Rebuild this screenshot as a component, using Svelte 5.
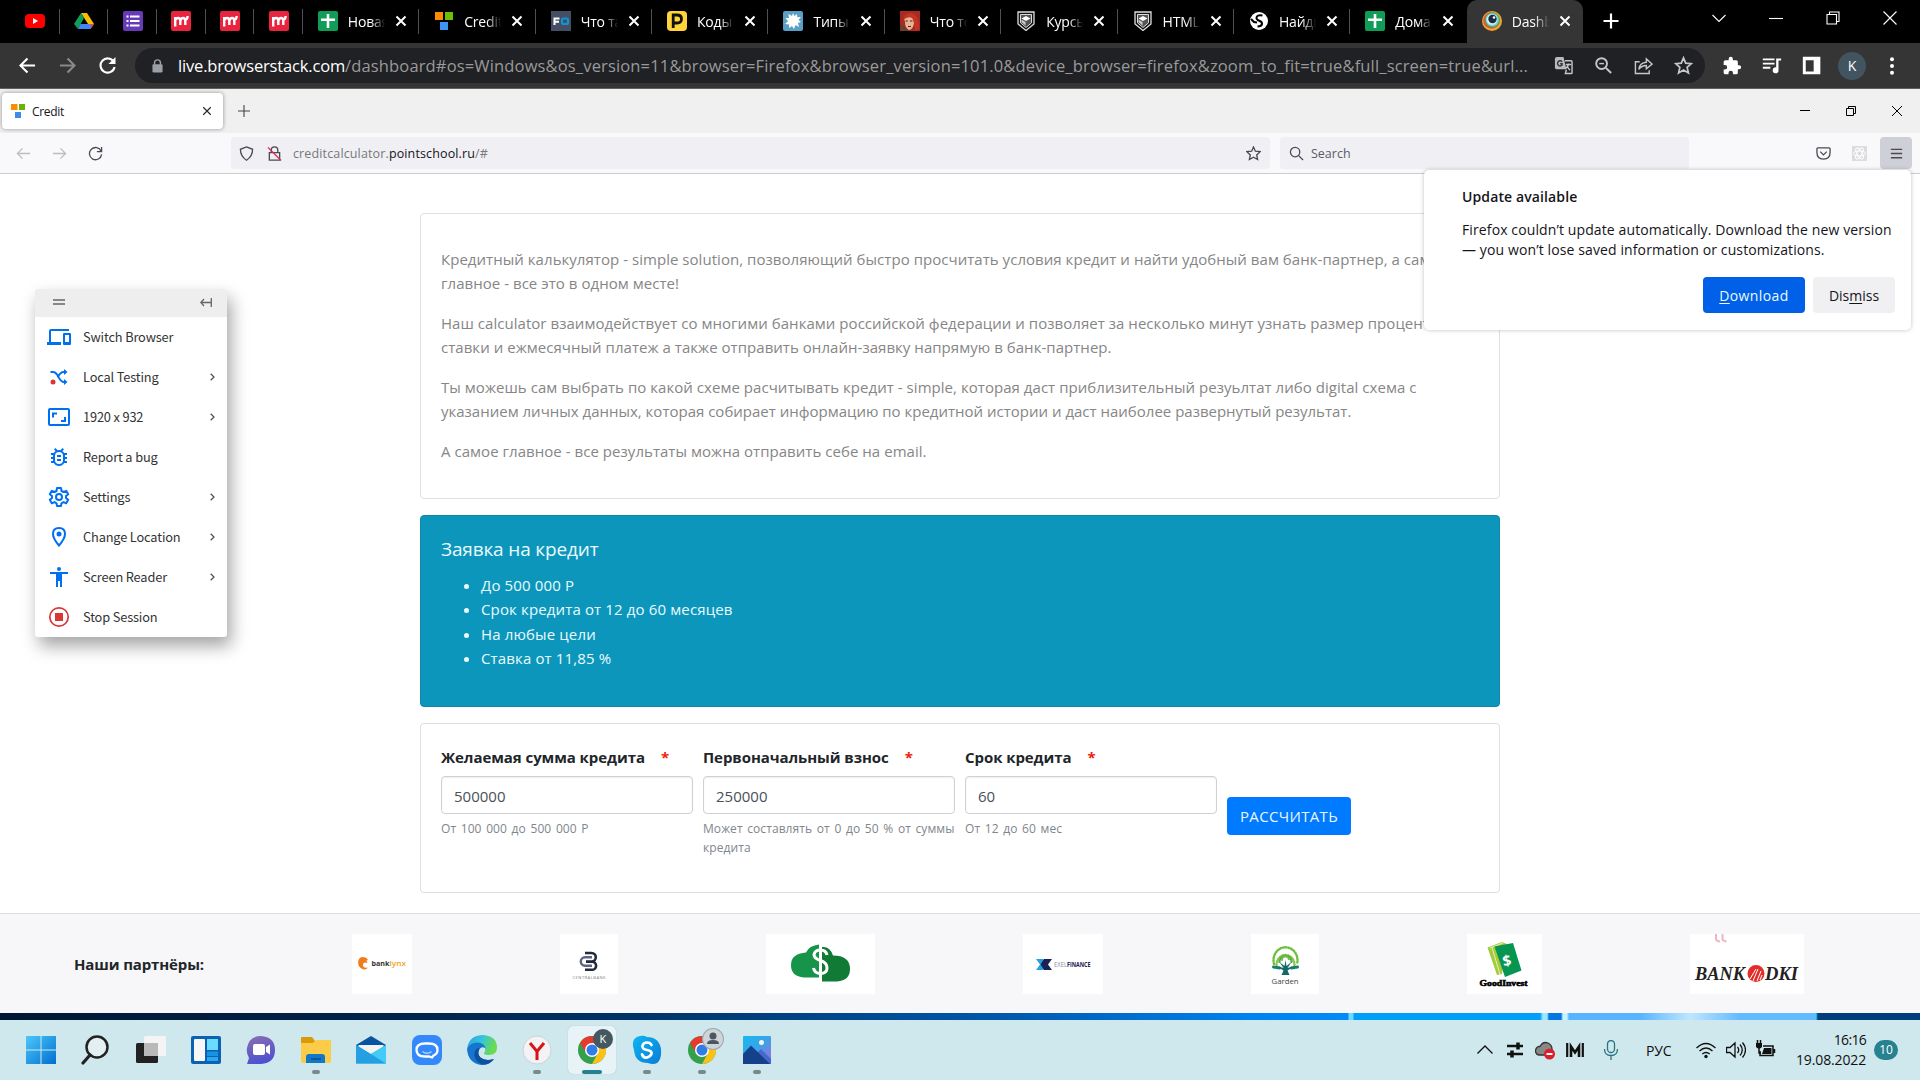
<script>
  const pinned = ['youtube', 'drive', 'forms', 'miro', 'miro', 'miro'];
  const tabs = [
    { icon: 'sheets', title: 'Новая' },
    { icon: 'blocks', title: 'Credit' },
    { icon: 'fo', title: 'Что та' },
    { icon: 'p', title: 'Коды' },
    { icon: 'splat', title: 'Типы' },
    { icon: 'portrait', title: 'Что то' },
    { icon: 'shield', title: 'Курсы' },
    { icon: 'shield', title: 'HTML' },
    { icon: 'globe', title: 'Найди' },
    { icon: 'sheets', title: 'Дома' },
    { icon: 'bs', title: 'Dashb', active: true }
  ];
  const tools = [
    { icon: 'switch', label: 'Switch Browser' },
    { icon: 'local', label: 'Local Testing', more: true },
    { icon: 'resolution', label: '1920 x 932', more: true },
    { icon: 'bug', label: 'Report a bug' },
    { icon: 'gear', label: 'Settings', more: true },
    { icon: 'pin', label: 'Change Location', more: true },
    { icon: 'person', label: 'Screen Reader', more: true },
    { icon: 'stop', label: 'Stop Session' }
  ];
  const fields = [
    { label: 'Желаемая сумма кредита', value: '500000', hint: ['От 100 000 до 500 000 Р'] },
    { label: 'Первоначальный взнос', value: '250000', hint: ['Может составлять от 0 до 50 % от суммы', 'кредита'] },
    { label: 'Срок кредита', value: '60', hint: ['От 12 до 60 мес'] }
  ];
  const apps = [
    { icon: 'start' }, { icon: 'search' }, { icon: 'taskview' }, { icon: 'widgets' }, { icon: 'chat' },
    { icon: 'explorer', open: true }, { icon: 'mail' }, { icon: 'maru' }, { icon: 'edge' },
    { icon: 'yandex', open: true }, { icon: 'chromeK', open: true, active: true },
    { icon: 'skype', open: true }, { icon: 'chromeU', open: true }, { icon: 'photos', open: true }
  ];
</script>

{#snippet favicon(name)}
  <svg class="fav" viewBox="0 0 20 20">
    {#if name === 'youtube'}
      <rect y="3" width="20" height="14" rx="4" fill="#f00" /><path d="M8 7l5 3-5 3z" fill="#fff" />
    {:else if name === 'drive'}
      <path d="M7 2h6l7 11h-6z" fill="#fbbc04" /><path d="M7 2l3 5L4 18 0 13z" fill="#0f9d58" /><path d="M6.500 13H20l-3.500 5H4z" fill="#4285f4" /><path d="M17 13h3l-3.500 5z" fill="#ea4335" />
    {:else if name === 'forms'}
      <rect width="20" height="20" rx="2" fill="#673ab7" /><path d="M3.500 4.500h2v2h-2zM7 4.500h9.500v2H7zM3.500 9h2v2h-2zM7 9h9.500v2H7zM3.500 13.500h2v2h-2zM7 13.500h9.500v2H7z" fill="#fff" />
    {:else if name === 'miro'}
      <rect width="20" height="20" rx="2" fill="#e8243f" /><path d="M4.200 15.500V6M4.200 9.500Q5 7 7 7q2.300 0 2.300 3v4M9.300 10q.6-3 2.800-3t2.200 3v4M14 8.500q2.600.300 2.600-3.500" fill="none" stroke="#fff" stroke-width="2.400" />
    {:else if name === 'sheets'}
      <rect width="20" height="20" rx="2" fill="#0f9d58" /><path d="M8.700 3h2.600v4.500H17v2.600h-5.700V17H8.700v-6.900H3V7.500h5.700z" fill="#fff" />
    {:else if name === 'blocks'}
      <path d="M1 1h8v8H1z" fill="#ff8c00" /><path d="M11 1h8v8h-8z" fill="#6cc000" /><path d="M6 11h8v8H6z" fill="#3c96f0" />
    {:else if name === 'fo'}
      <rect width="20" height="20" fill="#454f63" /><path d="M3.500 14V7.500h5M3.500 10.800h4.500" stroke="#fff" stroke-width="2" fill="none" /><rect x="11" y="7.500" width="6" height="5.500" rx="1.500" fill="none" stroke="#1193d8" stroke-width="2.200" />
    {:else if name === 'p'}
      <rect width="20" height="20" rx="4" fill="#ffd43b" /><path d="M6.200 17V4H10q4.500 0 4.500 4t-4.500 4H7" fill="none" stroke="#111" stroke-width="2.800" />
    {:else if name === 'splat'}
      <rect width="20" height="20" rx="2" fill="#5ba0c4" /><path d="M10 2l1.500 3L14 3l.3 3.200L18 6l-2.500 3 2.500 2-3 1 1 4-3.500-2L11 18l-2-3-3 2 .2-3.500L2 13l3-2.700L2.500 7 6 7l-.5-4L9 5z" fill="#fff" />
    {:else if name === 'portrait'}
      <rect width="20" height="20" fill="#a82a20" /><path d="M4 7q3-4 9-1l1 6q-1 7-5 7-4-2-4-8z" fill="#e8b394" /><path d="M3 9Q5 1 11 2q8 1 8 16l-4 2q0-9-3-13-4-2-9 2z" fill="#c23524" /><path d="M0 13l6 4 2 3H0z" fill="#68402f" /><path d="M5.500 10h2.300M10 10h2.500M8 15.500h3" stroke="#4f2025" stroke-width="1.200" />
    {:else if name === 'shield'}
      <path d="M2 1h16v12l-8 6.500L2 13z" fill="#111" stroke="#ddd" stroke-width="1.300" /><path d="M4.500 3.500h11v8.300L10 16.500l-5.500-4.700z" fill="#555" stroke="#ddd" /><path d="M5.500 7.500L10 5l4.500 2.500L10 10z" fill="#fff" /><path d="M5.500 8.800l4 2.300v3.500l-4-3.500z" fill="#ccc" />
    {:else if name === 'globe'}
      <circle cx="10" cy="10" r="9" fill="#fff" /><path d="M13.500 4.500q-6-1-6 2.500c0 3.500 6 2 5.500 6q-.5 2.500-4.500 2.500M2 8l3 3 3 .5" fill="none" stroke="#000" stroke-width="2" />
    {:else if name === 'bs'}
      <circle cx="10" cy="10" r="10" fill="#f0a62d" /><circle cx="9.500" cy="9.500" r="8.300" fill="#e4503f" /><circle cx="10.500" cy="9" r="7.500" fill="#4fae4e" /><circle cx="10.300" cy="8.700" r="6.500" fill="#7fd3ea" /><circle cx="10" cy="8.500" r="5.200" fill="#d9f1f8" /><circle cx="10.500" cy="8" r="4.200" fill="#192c3a" /><circle cx="12" cy="6.500" r="1.300" fill="#fff" />
    {/if}
  </svg>
{/snippet}

{#snippet cross(cls)}
  <svg class={cls} viewBox="0 0 12 12"><path d="M1.500 1.500l9 9M10.500 1.500l-9 9" /></svg>
{/snippet}

{#snippet toolIcon(name)}
  <svg class="tool-icon" class:red={name === 'stop'} viewBox="0 0 24 24">
    {#if name === 'switch'}
      <path d="M4 6h18V4H4q-2 0-2 2v11H0v3h14v-3H4zM23 8h-6q-1 0-1 1v10q0 1 1 1h6q1 0 1-1V9q0-1-1-1zm-1 9h-4v-7h4z" />
    {:else if name === 'local'}
      <path d="M3.500 7H6q3 0 5.500 5t5.500 5h2M10.500 12.500q3-5.500 6-5.500H19" fill="none" stroke="#0070f0" stroke-width="1.800" /><path d="M17 4l3.500 3L17 10zM17 14l3.500 3-3.500 3z" /><circle cx="6" cy="17" r="2.500" fill="#d93636" />
    {:else if name === 'resolution'}
      <rect x="2" y="4" width="20" height="16" rx="1" fill="none" stroke="#0070f0" stroke-width="2" /><path d="M5 7.500h5v2H7v3H5zM19 17h-5v-2h3v-3h2z" />
    {:else if name === 'bug'}
      <path d="M20 8h-2.800a6 6 0 0 0-1.800-2L17 4.400 15.600 3l-2.200 2.200a6 6 0 0 0-2.800 0L8.400 3 7 4.400 8.600 6a6 6 0 0 0-1.800 2H4v2h2.100L6 11v1H4v2h2v1l.1 1H4v2h2.800a6 6 0 0 0 10.400 0H20v-2h-2.100l.1-1v-1h2v-2h-2v-1l-.1-1H20zm-4 7a4 4 0 0 1-8 0v-4a4 4 0 0 1 8 0zm-6-1h4v2h-4zm0-4h4v2h-4z" />
    {:else if name === 'gear'}
      <path d="M10 3h4l.5 3 2 1 2.700-1.200 2 3.400L19 11v2l2.200 1.800-2 3.400-2.700-1.100-2 1.200L14 21h-4l-.5-2.700-2-1.200-2.700 1.100-2-3.400L5 13v-2L2.800 9.200l2-3.400L7.500 7l2-1z" fill="none" stroke="#0070f0" stroke-width="2" stroke-linejoin="round" /><circle cx="12" cy="12" r="3" fill="none" stroke="#0070f0" stroke-width="2" />
    {:else if name === 'pin'}
      <path d="M12 3q-6 0-6 6 0 4.500 6 11.500Q18 13.500 18 9q0-6-6-6z" fill="none" stroke="#0070f0" stroke-width="2" /><circle cx="12" cy="9" r="2.500" />
    {:else if name === 'person'}
      <circle cx="12" cy="4" r="2" /><path d="M21 9h-6v13h-2v-6h-2v6H9V9H3V7h18z" />
    {:else}
      <circle cx="12" cy="12" r="9.200" fill="none" stroke="#d93636" stroke-width="1.700" /><path d="M8 8h8v8H8z" />
    {/if}
  </svg>
{/snippet}

{#snippet chrome()}
  <circle cx="15" cy="15" r="14" fill="#34a04c" />
  <path d="M3 8a14 14 0 0 1 24.300 0L15 9z" fill="#e33b2e" /><path d="M3 8l6 10 6-10z" fill="#e33b2e" />
  <path d="M15 8h12.200A14 14 0 0 1 15 29l6-11z" fill="#fbc116" />
  <circle cx="15" cy="15" r="7" fill="#fff" /><circle cx="15" cy="15" r="5.500" fill="#2f7de9" />
{/snippet}

{#snippet appIcon(name)}
  <svg class="app-icon" viewBox="0 0 30 30">
    {#if name === 'start'}
      <defs><linearGradient id="win" x2="1" y2="1" gradientUnits="objectBoundingBox"><stop stop-color="#4cc8fa" /><stop offset="1" stop-color="#006fd0" /></linearGradient></defs>
      <path d="M0 1h14.500v13.500H0zM15.500 1H30v13.500H15.500zM0 15.500h14.500V29H0zM15.500 15.500H30V29H15.500z" fill="url(#win)" />
    {:else if name === 'search'}
      <circle cx="16" cy="12" r="10.500" fill="#e4eff2" stroke="#222" stroke-width="2.500" /><path d="M9 20l-7 8" stroke="#222" stroke-width="3.200" stroke-linecap="round" />
    {:else if name === 'taskview'}
      <rect x="0" y="8" width="22" height="20" rx="1.500" fill="#222" /><rect x="8" y="1" width="22" height="20" rx="1.500" fill="#f4f4f4" /><path d="M8 8h14v13H9q-1 0-1-1z" fill="#b9b9b9" />
    {:else if name === 'widgets'}
      <rect y="1" width="30" height="28" rx="2" fill="#0c62b0" /><rect x="3" y="4" width="11" height="22" rx="1" fill="#f7f7f7" /><path d="M16 4h11v11H16z" fill="#6bdcff" /><path d="M16 16.500h11V21H16z" fill="#1494e6" /><path d="M16 22h11v4H16z" fill="#28a9f0" />
    {:else if name === 'chat'}
      <defs><linearGradient id="cht" y2="1" x2=".3"><stop stop-color="#8a6faf" /><stop offset="1" stop-color="#4f52cf" /></linearGradient></defs>
      <path d="M1 29l2-6Q0 18 1 13 3 1 15 1q14 1 14 14T15 29z" fill="url(#cht)" /><rect x="7" y="9" width="12" height="11" rx="2" fill="#fff" /><path d="M20 12l4-2.500v10L20 17z" fill="#fff" />
    {:else if name === 'explorer'}
      <path d="M0 3q0-1 1-1h10l3 4v4H0z" fill="#dc9a09" /><path d="M0 8h12l3-3h14q1 0 1 1v20q0 2-2 2H2q-2 0-2-2z" fill="#fccb48" /><path d="M5 28v-6q0-3 3-3h13q3 0 3 3v6z" fill="#1277c9" /><path d="M10 24h10" stroke="#064d88" stroke-width="1.500" />
    {:else if name === 'mail'}
      <path d="M0 10L15 1l15 9v6H0z" fill="#0a53a0" /><path d="M2.500 10h25v2L15 20 2.500 12z" fill="#f3f3f3" /><path d="M0 10l15 9 15-9v18.500H0z" fill="#30b4ee" /><path d="M0 10l30 18.500H0z" fill="#239fe2" /><path d="M15 19l15-9v18.500z" fill="#43caf6" />
    {:else if name === 'maru'}
      <rect width="30" height="30" rx="8" fill="#3389fb" /><path d="M17 21.500H13q-8.500 0-8.500-6.500T13 8.500h4q8.500 0 8.500 6.500 0 4-4 5.500l-1.500 2z" fill="none" stroke="#fff" stroke-width="2.300" /><path d="M10.500 16.500q4.500 3.500 9 0" fill="none" stroke="#a9d2ff" stroke-width="1.500" />
    {:else if name === 'edge'}
      <defs><linearGradient id="ed" x2="1" y2=".3"><stop stop-color="#2a9fe4" /><stop offset=".5" stop-color="#33c4dc" /><stop offset="1" stop-color="#6bdc4e" /></linearGradient></defs>
      <path d="M0 14Q2 0 16 0q14 1 14 12.500 0 7.500-8 7.500-5 0-5-2 2-2 1-5Q12 5 0 14z" fill="url(#ed)" /><path d="M0 14q3-6.500 10-6.500 8 .5 8.500 6-3-2.500-6 .5-3 4 1 8.500 5 4 13.500 1.500-5 6.500-13 6Q1 28 0 14z" fill="#1875cf" /><path d="M11.500 12.500q-5 3-4 9 2.500 7 9 8Q23 29.500 27 24q-8 2.500-13-1-4.500-4-1.500-9z" fill="#0c509e" />
    {:else if name === 'yandex'}
      <circle cx="15" cy="15" r="14" fill="#f3f3f3" stroke="#c9d3d6" /><path d="M8 8l7 8.500L22 8M15 16v9" stroke="#d8131a" stroke-width="3" fill="none" />
    {:else if name === 'skype'}
      <defs><linearGradient id="sky" y2="1"><stop stop-color="#0db6f2" /><stop offset="1" stop-color="#0b7cd5" /></linearGradient></defs>
      <path d="M8 1q4-1 7 1 12 0 14 12 1 15-8 15-3 0-5-1Q3 28 2 15-2 3 8 1z" fill="url(#sky)" /><path d="M19.500 10q-1-2.500-4.500-2.500t-4.500 3.200 4.500 4.300 4.500 3.800-4.500 3.700-5-3.200" fill="none" stroke="#fff" stroke-width="2.700" stroke-linecap="round" />
    {:else if name === 'photos'}
      <defs><linearGradient id="ph" x2="1" y2="1"><stop stop-color="#18b9ee" /><stop offset=".45" stop-color="#36a5ea" /><stop offset="1" stop-color="#a46ad8" /></linearGradient></defs>
      <rect x="1" y="1" width="28" height="28" rx="1" fill="url(#ph)" /><path d="M13 20l6-6 10 10v5H10z" fill="#4468cc" /><path d="M1 19l8-8.500L28 29H1z" fill="#14418a" /><circle cx="19.500" cy="7.500" r="2.500" fill="#f3f5e7" />
    {:else}
      {@render chrome()}
    {/if}
  </svg>
{/snippet}

<div class="screen">
  <header class="tabstrip">
    {#each pinned as name}
      <div class="pinned">{@render favicon(name)}</div>
    {/each}
    {#each tabs as tab, i}
      <div class="tab" class:active={tab.active} class:last={i === tabs.length - 2}>
        {@render favicon(tab.icon)}
        <span class="tab-title">{tab.title}</span>
        {@render cross('tab-close')}
      </div>
    {/each}
    <svg class="newtab" viewBox="0 0 16 16"><path d="M8 .5v15M.5 8h15" /></svg>
    <div class="winbtns">
      <svg viewBox="0 0 14 14"><path d="M.5 4l6.500 6.500L13.500 4" /></svg>
      <svg viewBox="0 0 14 14"><path d="M0 7.500h14" /></svg>
      <svg viewBox="0 0 14 14"><path d="M1 3.500h9.500V13H1zM3.500 3.500V1H13v9.500h-2.500" /></svg>
      <svg viewBox="0 0 14 14"><path d="M.5.500l13 13M13.500.500l-13 13" /></svg>
    </div>
  </header>

  <div class="toolbar">
    <div class="cell"><svg viewBox="0 0 18 18" class="nav"><path d="M17 9H2M9 1.500L1.500 9 9 16.500" /></svg></div>
    <div class="cell"><svg viewBox="0 0 18 18" class="nav dim"><path d="M1 9h15M9 1.500L16.500 9 9 16.500" /></svg></div>
    <div class="cell"><svg viewBox="0 0 18 18" class="nav"><path d="M15.500 5A7.500 7.500 0 1 0 16.500 10.500" /><path d="M17.500 0v7.500H10z" class="solid" /></svg></div>
    <div class="omnibox">
      <svg class="lock" viewBox="0 0 12 15"><path d="M2.800 6V4a3.200 3.200 0 0 1 6.400 0v2" fill="none" stroke="#9aa0a6" stroke-width="1.600" /><rect x=".5" y="5.500" width="11" height="9" rx="1.300" fill="#9aa0a6" /></svg>
      <span class="address"><b>live.browserstack.com</b>/dashboard#os=Windows&amp;os_version=11&amp;browser=Firefox&amp;browser_version=101.0&amp;device_browser=firefox&amp;zoom_to_fit=true&amp;full_screen=true&amp;url...</span>
      <div class="cell"><svg viewBox="0 0 20 20" class="act"><path d="M3 1h7l3 13H3q-2 0-2-2V3q0-2 2-2z" fill="#b8babd" stroke="none" /><path d="M11.500 5H18q1 0 1 1v11.500q0 1-1 1h-6l1-4M12.500 9H18M15.300 8v1q-1 3-3 4M14 11q1.500 3 3 4" /><path d="M8.500 6a2.700 2.700 0 1 0 0 3.500V8.200H6.500" stroke="#333" /></svg></div>
      <div class="cell"><svg viewBox="0 0 20 20" class="act"><circle cx="8" cy="8" r="5.700" stroke-width="2" /><path d="M12.500 12.500L18 18" stroke-width="2.200" /><path d="M5.500 8h5" /></svg></div>
      <div class="cell"><svg viewBox="0 0 20 20" class="act"><path d="M6 6H1.500v12.500H16V15M5 14q1-7 8-7.500V3l6 5.500L13 13.500V10q-5 0-8 4z" /></svg></div>
      <div class="cell"><svg viewBox="0 0 20 20" class="act"><path d="M10 2l2.300 5.500 6 .5-4.500 4 1.400 5.800L10 14.700l-5.200 3.100L6.200 12 1.700 8l6-.5z" stroke-width="1.800" /></svg></div>
    </div>
    <div class="actions">
      <div class="cell"><svg viewBox="0 0 24 24" class="ext"><path d="M20.500 11H19V7q0-2-2-2h-4V3.500a2.500 2.500 0 0 0-5 0V5H4Q2 5 2 7v3.800h1.500a2.700 2.700 0 0 1 0 5.400H2V20q0 2 2 2h3.800v-1.500a2.700 2.700 0 0 1 5.400 0V22H17q2 0 2-2v-4h1.500a2.500 2.500 0 0 0 0-5z" /></svg></div>
      <div class="cell"><svg viewBox="0 0 24 24" class="ext"><path d="M1 3h14v2.200H1zM1 8h14v2.200H1zM1 13h9v2.200H1zM17 3h6v2.500h-3.200V17a3.500 3.500 0 1 1-2.800-3.300z" /></svg></div>
      <div class="cell"><svg viewBox="0 0 24 24" class="ext"><path d="M1 1h21v21H1zm3.500 4v13.500H14V5z" fill-rule="evenodd" /></svg></div>
      <div class="cell"><span class="avatar">K</span></div>
      <div class="cell"><svg viewBox="0 0 24 24" class="ext"><circle cx="12" cy="4" r="2.400" /><circle cx="12" cy="12" r="2.400" /><circle cx="12" cy="20" r="2.400" /></svg></div>
    </div>
  </div>

  <div class="ff-tabs">
    <div class="ff-tab">
      <svg class="ff-fav" viewBox="0 0 14 14"><path d="M0 0h6.500v6H0z" fill="#ff8c00" /><path d="M8 0h6v6H8z" fill="#6bb300" /><path d="M4 8h6v6H4z" fill="#3c8de8" /></svg>
      <span class="ff-title">Credit</span>
      {@render cross('ff-x')}
    </div>
    <svg class="ff-plus" viewBox="0 0 12 12"><path d="M6 0v12M0 6h12" /></svg>
    <div class="ff-win">
      <svg viewBox="0 0 14 14"><path d="M2 6.500h10" /></svg>
      <svg viewBox="0 0 14 14"><path d="M2.500 4.500h7v7h-7zM4.500 4.500v-2h7v7h-2" /></svg>
      <svg viewBox="0 0 14 14"><path d="M2 2l10 10M12 2L2 12" /></svg>
    </div>
  </div>

  <div class="ff-nav">
    <div class="ff-btns">
      <svg class="off" viewBox="0 0 16 16"><path d="M15 8H1.500M7 2.500L1.500 8 7 13.500" /></svg>
      <svg class="off" viewBox="0 0 16 16"><path d="M1 8h13.500M9 2.500L14.500 8 9 13.500" /></svg>
      <svg viewBox="0 0 16 16"><path d="M14 5.500A6.500 6.500 0 1 0 14.500 9M14.500 1v5h-5" /></svg>
    </div>
    <div class="ff-url">
      <svg viewBox="0 0 16 16"><path d="M8 1l6.500 2.500Q14.500 11 8 15.200 1.500 11 1.500 3.500z" /></svg>
      <svg viewBox="0 0 16 16"><path d="M4.500 7V4.500a3.500 3.500 0 0 1 7 0V7M2.500 7h11v8h-11z" /><path d="M1 1.500l14 14" stroke="#e22850" /></svg>
      <span class="ff-address">creditcalculator.<b>pointschool.ru</b>/#</span>
      <svg class="ff-star" viewBox="0 0 16 16"><path d="M8 1l2 4.500 5 .500-3.600 3.500 1 5L8 12l-4.400 2.500 1-5L1 6l5-.5z" /></svg>
    </div>
    <div class="ff-search">
      <svg viewBox="0 0 16 16"><circle cx="6.500" cy="6.500" r="5" /><path d="M10 10l5 5" /></svg>
      <span>Search</span>
    </div>
    <div class="ff-ext">
      <svg viewBox="0 0 16 16"><path d="M2 2h12q1 0 1 1v4q0 7-7 7T1 7V3q0-1 1-1zM4.500 6L8 9.500 11.500 6" /></svg>
      <svg viewBox="0 0 16 16"><rect width="16" height="16" fill="#dcdcdc" stroke="none" /><g stroke="#fff" stroke-width="1"><ellipse cx="8" cy="8" rx="6.500" ry="2.700" /><ellipse cx="8" cy="8" rx="6.500" ry="2.700" transform="rotate(60 8 8)" /><ellipse cx="8" cy="8" rx="6.500" ry="2.700" transform="rotate(120 8 8)" /></g></svg>
    </div>
    <div class="ff-menu"><svg viewBox="0 0 16 16"><path d="M2 3.500h12M2 8h12M2 12.500h12" /></svg></div>
  </div>

  <main class="page">
    <section class="card intro">
      <p>Кредитный калькулятор - simple solution, позволяющий быстро просчитать условия кредит и найти удобный вам банк-партнер, а самое<br />главное - все это в одном месте!</p>
      <p>Наш calculator взаимодействует со многими банками российской федерации и позволяет за несколько минут узнать размер процентной<br />ставки и ежмесячный платеж а также отправить онлайн-заявку напрямую в банк-партнер.</p>
      <p>Ты можешь сам выбрать по какой схеме расчитывать кредит - simple, которая даст приблизительный резуьлтат либо digital схема с<br /><span class="tight">указанием личных данных, которая собирает информацию по кредитной истории и даст наиболее развернутый результат.</span></p>
      <p>А самое главное - все результаты можна отправить себе на email.</p>
    </section>

    <section class="card offer">
      <h2>Заявка на кредит</h2>
      <ul>
        <li>До 500 000 Р</li>
        <li>Срок кредита от 12 до 60 месяцев</li>
        <li>На любые цели</li>
        <li>Ставка от 11,85 %</li>
      </ul>
    </section>

    <section class="card calc">
      {#each fields as f}
        <div class="field">
          <span class="label">{f.label}<i>*</i></span>
          <div class="input">{f.value}</div>
          <small>{#each f.hint as line}<span>{line}</span>{/each}</small>
        </div>
      {/each}
      <button class="submit">РАССЧИТАТЬ</button>
    </section>
  </main>

  <footer class="partners">
    <strong>Наши партнёры:</strong>
    <div class="logo lynx">
      <svg viewBox="0 0 60 60"><path d="M14.500 24q-6-3-8 2-2 7 5 9.500 3 .500 4.500-2-5 1-5-2.500t4.500-2l-1-2.500 1.500-.500z" fill="#ef7d1c" /><text x="19.500" y="32" font-size="7.500" font-weight="700" textLength="18" lengthAdjust="spacingAndGlyphs" fill="#333">bank</text><text x="37.500" y="32" font-size="7.500" font-weight="600" textLength="16.500" lengthAdjust="spacingAndGlyphs" fill="#efa122">lynx</text></svg>
    </div>
    <div class="logo central">
      <svg viewBox="0 0 58 60"><path d="M25 19h6.500a4.300 4.300 0 0 1 0 8.600H26M32 27.600a4.100 4.100 0 0 1 0 8.200H25" fill="none" stroke="#22293b" stroke-width="2.600" /><path d="M32 23.300h-7a4.200 4.200 0 0 0 0 8.400h7" fill="none" stroke="#5d6380" stroke-width="2.400" /><text x="12.500" y="44.500" font-size="4" textLength="33" lengthAdjust="spacing" fill="#777">CENTRALBANK</text></svg>
    </div>
    <div class="logo cloud">
      <svg viewBox="0 0 109 60"><path d="M53 43.500H38q-13-1-13-12.500t15-12.500q3-7 13-8z" fill="#16944a" /><path d="M56 47.500V13q8-1 11 8.500 17 0 17 13.500 0 11.500-13 12.500z" fill="#117a35" /><path d="M61 21q-1-5-6.500-5T48 20.500q0 4 6.500 6t6.500 7.500q0 5.500-6.500 5.500-6 0-7-5.500M54.500 10v34" stroke="#fff" stroke-width="3" fill="none" /></svg>
    </div>
    <div class="logo exel">
      <svg viewBox="0 0 80 60"><path d="M13 25h7l4 5.500-4 5.500h-7l4-5.500z" fill="#26a3dc" /><path d="M21 25h8l-4 5.500 4 5.500h-8l-3.500-5.500z" fill="#1a2154" /><text x="31" y="33" font-size="6.500" textLength="13" lengthAdjust="spacingAndGlyphs" fill="#858aa0">EXEL</text><text x="44" y="33" font-size="6.500" font-weight="700" textLength="23.500" lengthAdjust="spacingAndGlyphs" fill="#1a2154">FINANCE</text></svg>
    </div>
    <div class="logo garden">
      <svg viewBox="0 0 68 60"><g fill="none" stroke-linecap="round" stroke-dasharray="1.200 1.700"><path d="M23 30a12 13 0 1 1 23 0" stroke="#6cbf3f" stroke-width="2.400" /><path d="M25.500 31a9 10 0 1 1 18 0" stroke="#8cc63f" stroke-width="2.400" /><path d="M28.500 28a6 6 0 1 1 12 0" stroke="#4bab58" stroke-width="2.200" /><path d="M31 26a3.500 3.500 0 0 1 7 0" stroke="#7abf4a" stroke-width="2" /><path d="M22.500 33l6 1M46.500 33l-6 1" stroke="#158074" stroke-width="3" /></g><path d="M30.500 41l2-4.500-8-5 8 2.500-4-6 5 4 1-6 1 6 5-4-4 6 8-2.500-8 5 2 4.500z" fill="#116a67" /><text x="20.500" y="50" font-size="8" textLength="27" lengthAdjust="spacingAndGlyphs" fill="#444">Garden</text></svg>
    </div>
    <div class="logo invest">
      <svg viewBox="0 0 75 60"><path d="M20.500 13.500L35 8l5 2-5 30-5 1z" fill="#a5cb3b" /><path d="M23 14l13-5M25 13.500l8 27" fill="none" stroke="#fff" stroke-width=".7" /><path d="M27.500 12.500L46 9l8.500 27.500L38 43z" fill="#079552" /><text x="35.500" y="32" font-size="15" font-weight="700" fill="#fff" transform="rotate(-12 40 27)">$</text><text x="12.500" y="52" font-size="7.500" font-weight="900" class="serif" textLength="48" lengthAdjust="spacingAndGlyphs" stroke="#000" stroke-width=".5">GoodInvest</text></svg>
    </div>
    <div class="logo dki">
      <svg viewBox="0 0 114 60"><path d="M26 0v5q0 2 4 2.500M32.500 0v5q0 2 4 2.500" stroke="#f0b5c0" stroke-width="2" fill="none" /><g class="serif" font-weight="700" font-style="italic" font-size="19" fill="#222"><text x="5" y="46" textLength="50" lengthAdjust="spacingAndGlyphs">BANK</text><text x="75" y="46" textLength="33" lengthAdjust="spacingAndGlyphs">DKI</text></g><circle cx="66" cy="39.500" r="8.500" fill="#e32d2c" /><path d="M60 45l6-10M63 47l5-12M67 47l4-10M70 46l2-5" stroke="#fff" stroke-width="1" /></svg>
    </div>
  </footer>

  <div class="wallpaper"></div>

  <div class="taskbar">
    <div class="apps">
      {#each apps as app}
        <div class="app" class:current={app.active} class:open={app.open}>
          {@render appIcon(app.icon)}
          {#if app.icon === 'chromeK'}<span class="badge k">K</span>{/if}
          {#if app.icon === 'chromeU'}
            <span class="badge"><svg viewBox="0 0 20 20"><circle cx="10" cy="7" r="3.500" /><path d="M4 15q0-4 6-4t6 4z" /></svg></span>
          {/if}
        </div>
      {/each}
    </div>
    <div class="tray">
      <svg viewBox="0 0 20 20"><path d="M2.500 13.500L10 6l7.500 7.500" /></svg>
      <svg viewBox="0 0 20 20"><path d="M2 6h16M2 14h16" stroke-width="2.300" /><path d="M13 2.500v7M7 10.500v7" stroke-width="3.500" /></svg>
      <svg viewBox="0 0 20 20"><path d="M4 15q-4-1-3.500-5Q2 6 5 6.500 8 1 13 3q4 2 4 6v6z" fill="#888" stroke="#333" /><circle cx="14.500" cy="14" r="5.500" fill="#dc1f2c" stroke="none" /><path d="M11.500 14h6" stroke="#fff" stroke-width="2" /></svg>
      <svg viewBox="0 0 20 20"><path d="M2.200 3v14M17.800 3v14" stroke-width="2.200" /><path d="M6 17V6.500l4 6 4-6V17" stroke-width="2.600" /></svg>
      <svg class="mic" viewBox="0 0 20 20"><rect x="6.500" y=".5" width="7" height="12" rx="3.500" /><path d="M3.500 9q0 6.500 6.500 6.500T16.500 9M10 15.500V20" /></svg>
      <span class="lang">РУС</span>
      <svg viewBox="0 0 20 20"><path d="M.5 8q9.500-9 19 0M3.500 11q6.500-6 13 0M6.300 14q3.700-3 7.400 0" /><circle cx="10" cy="16.500" r="1.700" fill="#111" stroke="none" /></svg>
      <svg viewBox="0 0 20 20"><path d="M.5 7.500h3.500L9 3v14l-5-4.500H.5zM11.500 7q2.500 3 0 6M14 4.500q4.500 5.500 0 11M16.500 2.500q6 7.500 0 15" /></svg>
      <svg viewBox="0 0 20 20"><path d="M7 6h10v9.500H4V11M18.500 9v4" stroke-width="1.500" /><path d="M8 8h7.500v6H6z" fill="#111" stroke="none" /><path d="M0 3h6v4q-3 3-6 0z" fill="#111" stroke="none" /><path d="M1.500 0v3M4.500 0v3M3 7v6h2" stroke-width="1.500" /></svg>
      <div class="clock"><span class="time">16:16</span><span>19.08.2022</span></div>
      <span class="count">10</span>
    </div>
  </div>

  <aside class="widget">
    <div class="widget-head">
      <svg viewBox="0 0 12 6"><path d="M0 1h12M0 5h12" /></svg>
      <svg class="collapse" viewBox="0 0 12 9"><path d="M1 4.500h10M4 1L.8 4.500 4 8M11.300 0v9" /></svg>
    </div>
    {#each tools as t}
      <div class="tool">
        {@render toolIcon(t.icon)}
        <span class="tool-label">{t.label}</span>
        {#if t.more}<svg class="more" viewBox="0 0 5 8"><path d="M.7.700L4 4 .7 7.300" /></svg>{/if}
      </div>
    {/each}
  </aside>

  <div class="popup">
    <h3>Update available</h3>
    <p>Firefox couldn’t update automatically. Download the new version<br />— you won’t lose saved information or customizations.</p>
    <div class="popup-btns">
      <button class="primary"><u>D</u>ownload</button>
      <button>Dis<u>m</u>iss</button>
    </div>
  </div>
</div>

<style>
  :global(body) { margin: 0; background: #fff; }
  .screen {
    position: relative; display: flex; flex-direction: column;
    width: 1920px; height: 1080px; overflow: hidden;
    font-family: 'Open Sans', 'Noto Sans', sans-serif; color: #212529;
  }
  .screen * { box-sizing: border-box; }
  svg { flex: none; display: block; }
  button { font: inherit; border: 0; padding: 0; }
  .serif { font-family: 'Liberation Serif', serif; }

  .tabstrip { display: flex; height: 43px; flex: none; background: #000; padding-left: 11px; }
  .pinned, .tab { display: flex; align-items: center; flex: none; position: relative; padding-bottom: 1px; }
  .pinned { width: 48.650px; justify-content: center; }
  .tab { width: 116.400px; padding-left: 15px; }
  .pinned::after, .tab::after { content: ''; position: absolute; right: 0; top: 9px; width: 1px; height: 25px; background: #505050; }
  .tab.active::after, .tab.last::after { display: none; }
  .tab.active { background: #353535; border-radius: 10px 10px 0 0; }
  .fav { width: 20px; height: 20px; }
  .tab-title {
    width: 38px; margin-left: 10px; overflow: hidden; white-space: nowrap; color: #fff; font-size: 14px; letter-spacing: -.2px;
    mask-image: linear-gradient(90deg, #000 60%, transparent 98%);
  }
  .tab-close { width: 12px; height: 12px; margin-left: 9px; fill: none; stroke: #fff; stroke-width: 2; }
  .newtab { width: 16px; height: 16px; margin: 13px 0 0 20px; stroke: #fff; stroke-width: 2.200; }
  .winbtns { display: flex; margin: 11px 0 0 auto; padding-right: 23px; gap: 43px; }
  .winbtns svg { width: 14px; height: 14px; fill: none; stroke: #fff; stroke-width: 1.100; }

  .toolbar { display: flex; align-items: center; height: 46px; flex: none; background: #353535; border-bottom: 1px solid #606060; padding-left: 7px; }
  .cell { width: 40px; display: flex; justify-content: center; flex: none; }
  .nav { width: 17px; height: 17px; fill: none; stroke: #fff; stroke-width: 2.200; }
  .nav.dim { stroke: #8a8a8a; }
  .solid { fill: #fff; stroke: none; }
  .omnibox { display: flex; align-items: center; width: 1570px; height: 35px; margin-left: 8px; padding: 0 2px 0 17px; border-radius: 18px; background: #202124; }
  .lock { width: 11px; height: 14px; }
  .address { flex: 1; margin-left: 15px; white-space: nowrap; font-size: 16.500px; letter-spacing: .152px; color: #9a9a9a; }
  .address b { font-weight: 400; letter-spacing: -.168px; color: #fff; }
  .act { width: 19px; height: 19px; fill: none; stroke: #c4c6c9; stroke-width: 1.500; }
  .actions { display: flex; align-items: center; margin-left: 7px; }
  .ext { width: 20px; height: 20px; fill: #fff; }
  .avatar { width: 28px; height: 28px; border-radius: 50%; background: #41545f; color: #fff; font-size: 14px; line-height: 28px; text-align: center; }

  .ff-tabs { display: flex; height: 44px; flex: none; background: #f0f0f0; padding-left: 2px; align-items: center; }
  .ff-tab { display: flex; align-items: center; width: 221px; height: 36px; background: #fff; border-radius: 4px; box-shadow: 0 0 4px rgba(0,0,0,.4); padding: 0 11px 0 9px; font-size: 12px; color: #15141a; }
  .ff-title { letter-spacing: -.3px; }
  .ff-fav { width: 14px; height: 14px; margin-right: 7px; }
  .ff-x { width: 10px; height: 10px; margin-left: auto; stroke: #222; stroke-width: 1.300; }
  .ff-plus { width: 12px; height: 12px; margin-left: 15px; stroke: #444; stroke-width: 1.100; }
  .ff-win { display: flex; gap: 32px; margin-left: auto; padding-right: 16px; }
  .ff-win svg { width: 14px; height: 14px; fill: none; stroke: #000; stroke-width: 1; }

  .ff-nav { display: flex; align-items: center; height: 41px; flex: none; background: #f9f9fb; border-bottom: 1px solid #ccc; }
  .ff-nav svg { width: 15px; height: 15px; fill: none; stroke: #4a4a52; stroke-width: 1.400; }
  .ff-btns { display: flex; gap: 21px; width: 231px; padding-left: 16px; }
  .ff-nav .off { stroke: #bdbdc2; }
  .ff-url, .ff-search { display: flex; align-items: center; height: 32px; border-radius: 4px; background: #f0f0f4; font-size: 12.500px; color: #77777c; }
  .ff-url { width: 1039px; padding: 0 9px 0 8px; gap: 13px; }
  .ff-address { margin-left: -2px; padding-top: 1px; letter-spacing: .134px; }
  .ff-address b { color: #15141a; font-weight: 400; }
  .ff-star { margin-left: auto; }
  .ff-search { width: 409px; margin-left: 10px; padding-left: 9px; gap: 7px; color: #5b5b66; }
  .ff-ext { display: flex; gap: 21px; margin-left: auto; padding-right: 13px; }
  .ff-menu { display: flex; align-items: center; justify-content: center; width: 32px; height: 32px; margin-right: 8px; border-radius: 4px; background: #cfcfd8; }

  .page { display: flex; flex-direction: column; gap: 16px; height: 739px; flex: none; padding: 39px 420px 0; font-size: 15px; line-height: 24px; }
  .card { border: 1px solid #dfdfdf; border-radius: 4px; flex: none; white-space: nowrap; }
  .intro { height: 286px; padding: 33px 20px 0; color: #868686; letter-spacing: .042px; }
  .intro p { margin: 0 0 16px; }
  .tight { letter-spacing: 0; }
  .offer { height: 192px; padding: 21px 20px 0; background: #0d96bb; border-color: #1186a6; color: #e9fbff; }
  .offer h2 { margin: 0 0 12px; font-size: 19px; line-height: 24px; font-weight: 400; letter-spacing: -.153px; }
  .offer ul { margin: 0; padding-left: 40px; line-height: 24.400px; letter-spacing: .139px; }
  .calc { display: flex; gap: 10px; height: 170px; padding: 21px 20px 0; }
  .field { width: 252px; }
  .label { display: block; font-weight: 700; letter-spacing: -.07px; }
  .label i { font-style: normal; color: #f21b0c; margin-left: 16px; }
  .input { height: 38px; margin-top: 7px; padding: 1px 12px 0; line-height: 37px; border: 1px solid #cdd1d5; border-radius: 4px; color: #495057; box-shadow: inset 0 1px 2px #0001; }
  .field small { display: flex; flex-direction: column; align-items: flex-start; margin-top: 5px; font-size: 12px; line-height: 19px; letter-spacing: .08px; word-spacing: 1.400px; color: #80868c; }
  .submit { width: 124px; height: 38px; margin-top: 52px; border-radius: 4px; background: #007bff; color: #e9f6ff; letter-spacing: .328px; }

  .partners { display: flex; align-items: center; height: 100px; flex: none; border-top: 1px solid #dcdcdc; background: #f7f6f9; padding-left: 74px; font-size: 15px; }
  .partners strong { width: 278px; letter-spacing: -.123px; padding-top: 1px; }
  .logo { height: 60px; background: #fff; }
  .logo svg { width: 100%; height: 60px; }
  .logo + .logo { margin-left: 148px; }
  .lynx { width: 60px; }
  .central { width: 58px; }
  .cloud { width: 109px; }
  .exel { width: 80px; }
  .garden { width: 68px; }
  .invest { width: 75px; }
  .dki { width: 114px; }

  .wallpaper { height: 7px; flex: none; background: linear-gradient(90deg, #001634 0, #00244c 400px, #003468 640px, #0058ab 1000px, #0082f0 1250px, #008cf8 1348px, #70d8ff 1349px 1353px, #009ffa 1354px 1540px, #9ee8ff 1543px 1547px, #0078e0 1549px 1561px, #c8f4ff 1563px 1567px, #58b4ff 1569px 1640px, #bfe6ff 1690px, #62bbff 1740px 1814px, #40c8ff 1816px, #003d7c 1818px); }

  .taskbar { display: flex; height: 60px; flex: none; background: #cfe8ee; }
  .apps { display: flex; padding-left: 17px; }
  .app { position: relative; display: flex; align-items: center; justify-content: center; width: 48px; height: 48px; margin: 6px 7.080px 0 0; border-radius: 5px; }
  .app.current { background: #e7f3f6; box-shadow: 0 0 1px #0004; }
  .app-icon { width: 30px; height: 30px; }
  .app.open::after { content: ''; position: absolute; bottom: 0; left: 20px; width: 8px; height: 4px; border-radius: 2px; background: #7a878b; }
  .app.current::after { left: 14px; width: 20px; background: #218292; }
  .badge { position: absolute; left: 25px; top: 3px; width: 20px; height: 20px; border-radius: 50%; background: #cfd4d8; font-size: 11px; line-height: 20px; text-align: center; color: #fff; box-shadow: 0 0 0 1px #9aa; }
  .badge.k { background: #455862; box-shadow: none; }
  .badge svg { width: 20px; height: 20px; fill: #4a5661; }
  .tray { display: flex; align-items: center; gap: 10px; margin-left: auto; padding-right: 22px; color: #111; }
  .tray svg { width: 20px; height: 20px; fill: none; stroke: #111; stroke-width: 1.300; }
  .tray .mic { stroke: #2b7482; margin: 0 15px 0 6px; }
  .lang { font-size: 14px; width: 25px; margin-right: 15px; letter-spacing: -.2px; }
  .clock { display: flex; flex-direction: column; align-items: flex-end; width: 80px; font-size: 14px; line-height: 20px; letter-spacing: -.14px; }
  .time { letter-spacing: -.7px; }
  .count { width: 24px; height: 20px; margin-left: -2px; border-radius: 10px; background: #26828f; color: #fff; font-size: 12px; line-height: 20px; text-align: center; }

  .widget { position: absolute; left: 35px; top: 289px; width: 192px; height: 348px; border-radius: 3px; background: #fff; box-shadow: 4px 9px 17px rgba(0,0,0,.36); font-family: 'Noto Sans CJK JP', sans-serif; font-size: 12.800px; letter-spacing: -.15px; color: #333; }
  .widget-head { display: flex; align-items: center; justify-content: space-between; height: 28px; padding: 0 15px 2px 18px; background: #eee; border-radius: 3px 3px 0 0; }
  .widget-head svg { width: 12px; height: 6px; fill: none; stroke: #666; stroke-width: 1.300; }
  .widget-head .collapse { height: 9px; }
  .tool { display: flex; align-items: center; height: 40px; padding: 0 12px; }
  .tool-icon { width: 24px; height: 24px; margin-right: 12px; fill: #0070f0; }
  .tool-icon.red { fill: #d93636; }
  .tool-label { padding-bottom: 1px; }
  .more { width: 5px; height: 8px; margin-left: auto; fill: none; stroke: #555; stroke-width: 1.300; }

  .popup { position: absolute; left: 1424px; top: 170px; width: 487px; height: 160px; padding: 16px 16px 0 38px; border-radius: 5px; background: #fff; box-shadow: 0 0 4px rgba(0,0,0,.25); color: #15141a; font-size: 14px; letter-spacing: .115px; white-space: nowrap; }
  .popup h3 { margin: 0; font-size: 14px; line-height: 22px; font-weight: 600; }
  .popup p { margin: 12px 0 17px; line-height: 20px; }
  .popup-btns { display: flex; justify-content: flex-end; gap: 8px; }
  .popup button { width: 82px; height: 36px; border-radius: 4px; background: #f0f0f2; color: #15141a; }
  .popup button.primary { width: 102px; background: #0060e8; color: #e8fbff; letter-spacing: .4px; }
  .popup u { text-underline-offset: 2px; }
</style>
